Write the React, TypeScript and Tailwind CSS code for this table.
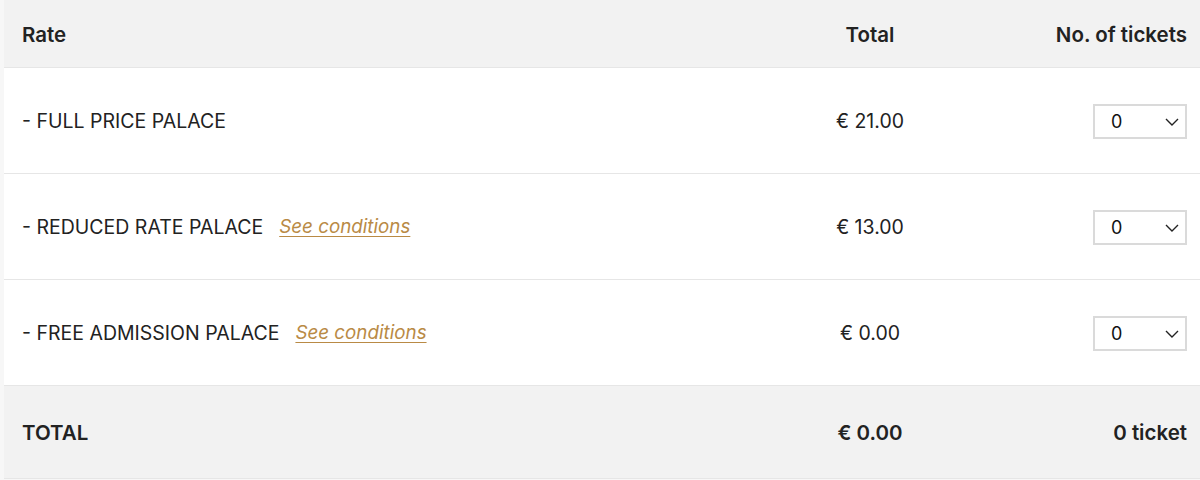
import { useState } from 'react';

type Rate = {
  id: string;
  label: string;
  price: number;
  conditions?: boolean;
};

const rates: Rate[] = [
  { id: 'full', label: '- FULL PRICE PALACE', price: 21 },
  { id: 'reduced', label: '- REDUCED RATE PALACE', price: 13, conditions: true },
  { id: 'free', label: '- FREE ADMISSION PALACE', price: 0, conditions: true },
];

const euro = (n: number) => `€ ${n.toFixed(2)}`;

function QtySelect({ value, onChange }: { value: number; onChange: (v: number) => void }) {
  return (
    <div className="relative w-[94px] h-[35px]">
      <select
        value={value}
        onChange={(e) => onChange(Number(e.target.value))}
        className="appearance-none w-full h-full border-2 border-[#dadada] bg-white pl-[16px] text-[18px] text-[#111] outline-none"
      >
        {[0, 1, 2, 3, 4, 5, 6, 7, 8, 9, 10].map((n) => (
          <option key={n} value={n}>
            {n}
          </option>
        ))}
      </select>
      <svg
        className="pointer-events-none absolute right-[8px] top-[14px]"
        width="14"
        height="8"
        viewBox="0 0 14 8"
        fill="none"
        stroke="#222"
        strokeWidth="1.4"
      >
        <path d="M1 1l6 6 6-6" />
      </svg>
    </div>
  );
}

function App() {
  const [qty, setQty] = useState<Record<string, number>>({ full: 0, reduced: 0, free: 0 });

  const total = rates.reduce((sum, r) => sum + r.price * (qty[r.id] || 0), 0);
  const count = rates.reduce((sum, r) => sum + (qty[r.id] || 0), 0);

  return (
    <div className="min-h-[480px] bg-[#f7f7f7] pl-[4px] font-['Inter','Liberation_Sans',sans-serif] text-[#222]">
      <div className="bg-white">
        {/* Header */}
        <div className="flex items-center h-[68px] pt-[3px] bg-[#f2f2f2] border-b border-[#e6e6e6] pl-[18px] pr-[13px] text-[20.5px] font-semibold">
          <div className="flex-1">Rate</div>
          <div className="w-[154px] text-center">Total</div>
          <div className="w-[240px] text-right">No. of tickets</div>
        </div>

        {/* Rows */}
        {rates.map((r) => (
          <div
            key={r.id}
            className="flex items-center h-[106px] pt-[2px] border-b border-[#e6e6e6] pl-[18px] pr-[13px] text-[19.5px]"
          >
            <div className="flex-1 flex items-center gap-[16px]">
              <span>{r.label}</span>
              {r.conditions && (
                <a href="#" className="italic text-[18.8px] text-[#b98a45] underline underline-offset-[3px]">
                  See conditions
                </a>
              )}
            </div>
            <div className="w-[154px] text-center">{euro(r.price)}</div>
            <div className="w-[240px] flex justify-end">
              <QtySelect
                value={qty[r.id]}
                onChange={(v) => setQty({ ...qty, [r.id]: v })}
              />
            </div>
          </div>
        ))}

        {/* Total */}
        <div className="flex items-center h-[93px] pt-[3px] bg-[#f2f2f2] border-b border-[#e6e6e6] pl-[18px] pr-[13px] text-[20.5px] font-semibold">
          <div className="flex-1">TOTAL</div>
          <div className="w-[154px] text-center">{euro(total)}</div>
          <div className="w-[240px] text-right">
            {count} {count > 1 ? 'tickets' : 'ticket'}
          </div>
        </div>
      </div>
    </div>
  );
}

export default App;
